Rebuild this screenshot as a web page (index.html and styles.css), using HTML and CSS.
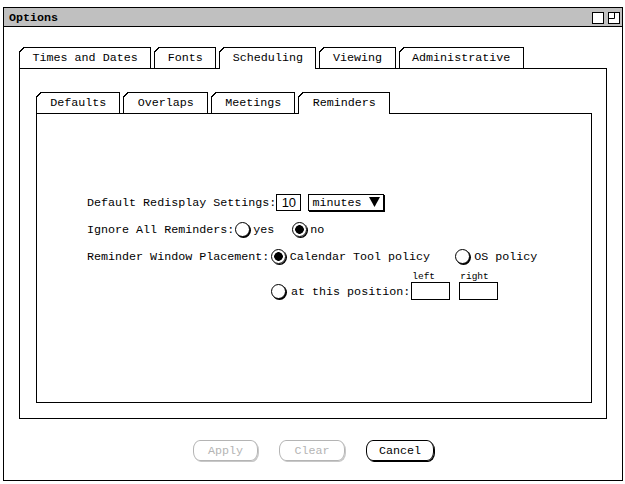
FILE: index.html
```html
<!DOCTYPE html>
<html>
<head>
<meta charset="utf-8">
<title>Options</title>
<link rel="stylesheet" href="styles.css">
</head>
<body>
<div class="window">
  <div class="titlebar">
    <span class="title">Options</span>
    <div class="wicons">
      <svg class="wicon" width="12" height="12" viewBox="0 0 12 12"><rect x="0.5" y="0.5" width="11" height="11" fill="#fff" stroke="#000"/></svg>
      <svg class="wicon" width="12" height="12" viewBox="0 0 12 12"><rect x="0.5" y="0.5" width="11" height="11" fill="#fff" stroke="#000"/><path d="M6.5 0.5 V6.5 H0.5" fill="none" stroke="#000"/></svg>
    </div>
  </div>
  <div class="content">
    <div class="tabs outer-tabs">
      <div class="tab">Times and Dates</div>
      <div class="tab">Fonts</div>
      <div class="tab active">Scheduling</div>
      <div class="tab">Viewing</div>
      <div class="tab">Administrative</div>
    </div>
    <div class="panel outer-panel">
      <div class="tabs inner-tabs">
        <div class="tab">Defaults</div>
        <div class="tab">Overlaps</div>
        <div class="tab">Meetings</div>
        <div class="tab active">Reminders</div>
      </div>
      <div class="panel inner-panel">
        <div class="form">
          <div class="row">
            <span class="label">Default Redisplay Settings:</span>
            <span class="field num">10</span>
            <span class="dropdown"><span class="dd-text">minutes</span><svg width="11" height="10" viewBox="0 0 11 10"><path d="M0 0 H11 L5.5 10 Z" fill="#000"/></svg></span>
          </div>
          <div class="row row-gap">
            <span class="label">Ignore All Reminders:</span>
            <span class="radio r-yes"></span><span class="opt">yes</span>
            <span class="radio on r-no"></span><span class="opt">no</span>
          </div>
          <div class="row row-gap">
            <span class="label">Reminder Window Placement:</span>
            <span class="radio on r-cal"></span><span class="opt">Calendar Tool policy</span>
            <span class="radio r-os"></span><span class="opt">OS policy</span>
          </div>
          <div class="row4">
            <div class="pos-choice">
              <span class="radio"></span><span class="opt">at this position:</span>
            </div>
            <div class="coord coord-left">
              <span class="small">left</span>
              <span class="field coord-box"></span>
            </div>
            <div class="coord coord-right">
              <span class="small">right</span>
              <span class="field coord-box"></span>
            </div>
          </div>
        </div>
      </div>
    </div>
    <div class="buttons">
      <span class="btn disabled btn-apply">Apply</span>
      <span class="btn disabled btn-clear">Clear</span>
      <span class="btn btn-cancel">Cancel</span>
    </div>
  </div>
</div>
</body>
</html>
```

FILE: styles.css
```css
html, body {
  margin: 0;
  padding: 0;
  background: #fff;
}
body {
  font-family: "Liberation Mono", "DejaVu Sans Mono", monospace;
  font-size: 11.7px;
  color: #000;
}
.window {
  box-sizing: border-box;
  width: 620px;
  margin: 7px 0 0 3px;
  border: 1px solid #000;
  background: #fff;
}
.titlebar {
  height: 18px;
  border-bottom: 1px solid #000;
  background: #c0c0c0;
  display: flex;
  align-items: center;
  justify-content: space-between;
  padding: 0 2px 0 5px;
}
.title {
  font-weight: bold;
  padding-top: 1px;
}
.wicons {
  display: flex;
  gap: 4px;
  padding-top: 1px;
}
.wicon {
  display: block;
}
.content {
  padding: 20px 15px 19px 15px;
}
.tabs {
  display: flex;
  align-items: flex-end;
  height: 21px;
}
.tab {
  box-sizing: border-box;
  position: relative;
  height: 21px;
  border: 1px solid #000;
  border-bottom: none;
  padding: 0 12.5px;
  line-height: 21px;
  margin-right: 3px;
  background: #fff;
  white-space: nowrap;
}
.inner-tabs .tab {
  padding: 0 13.2px;
}
.tab::before {
  content: "";
  position: absolute;
  left: -1px;
  top: -1px;
  width: 6px;
  height: 6px;
  background: linear-gradient(135deg, #fff 0 36%, #000 36% 54%, transparent 54%);
}
.tab.active {
  height: 22px;
  margin-bottom: -1px;
  z-index: 1;
}
.panel {
  border: 1px solid #000;
}
.outer-panel {
  height: 351px;
  box-sizing: border-box;
  padding: 23px 14px 15px 16px;
}
.inner-panel {
  height: 290px;
  box-sizing: border-box;
}
.form {
  padding: 79px 0 0 50px;
}
.row {
  display: flex;
  align-items: center;
  height: 18px;
  white-space: nowrap;
}
.row-gap {
  margin-top: 9px;
}
.label, .opt, .dd-text {
  padding-top: 2px;
}
.field {
  box-sizing: border-box;
  display: inline-block;
  border: 1px solid #000;
  height: 17px;
  background: #fff;
}
.num {
  width: 25px;
  margin-left: 0;
  text-align: center;
  line-height: 16px;
  font-family: "Liberation Sans", Arial, sans-serif;
  font-size: 13px;
}
.dropdown {
  box-sizing: border-box;
  display: flex;
  align-items: center;
  justify-content: space-between;
  width: 76px;
  height: 17px;
  margin-left: 7px;
  padding: 0 3px 0 3px;
  border: 1px solid #000;
  box-shadow: 1px 1px 0 #000;
}
.dropdown svg {
  display: block;
}
.radio {
  box-sizing: border-box;
  display: inline-block;
  width: 15px;
  height: 15px;
  border: 1px solid #000;
  border-radius: 50%;
  box-shadow: 1px 1px 0 #000;
  background: #fff;
  flex: none;
}
.radio.on {
  background: radial-gradient(circle, #000 0 4px, #fff 4.6px);
}
.opt {
  margin-left: 3px;
}
.r-yes { margin-left: 1px; }
.r-no { margin-left: 18px; }
.r-cal { margin-left: 1.5px; }
.r-cal + .opt { margin-left: 4px; }
.r-os { margin-left: 25px; }
.r-os + .opt { margin-left: 4px; }
.row4 {
  display: flex;
  align-items: flex-end;
  margin-top: 5px;
  white-space: nowrap;
}
.pos-choice {
  display: flex;
  align-items: center;
  height: 18px;
  margin-left: 184px;
}
.pos-choice .opt {
  margin-left: 5px;
}
.coord {
  display: flex;
  flex-direction: column;
}
.coord-left {
  margin-left: 1px;
}
.coord-right {
  margin-left: 9px;
}
.small {
  font-size: 9.5px;
  line-height: 11px;
  height: 11px;
  padding-left: 1px;
  padding-top: 1px;
}
.coord-box {
  width: 39px;
  height: 18px;
}
.buttons {
  display: flex;
  justify-content: center;
  gap: 21px;
  margin-top: 21px;
  padding-left: 1px;
}
.btn {
  box-sizing: border-box;
  display: inline-block;
  height: 21px;
  line-height: 21px;
  text-align: center;
  border: 1px solid #000;
  border-radius: 7px / 9px;
  box-shadow: 1px 1px 0 #000;
}
.btn.disabled {
  color: #b4b4b4;
  border-color: #b4b4b4;
  box-shadow: 1px 1px 0 #c8c8c8;
}
.btn-apply { width: 65px; }
.btn-clear { width: 66px; }
.btn-cancel { width: 68px; }
```
